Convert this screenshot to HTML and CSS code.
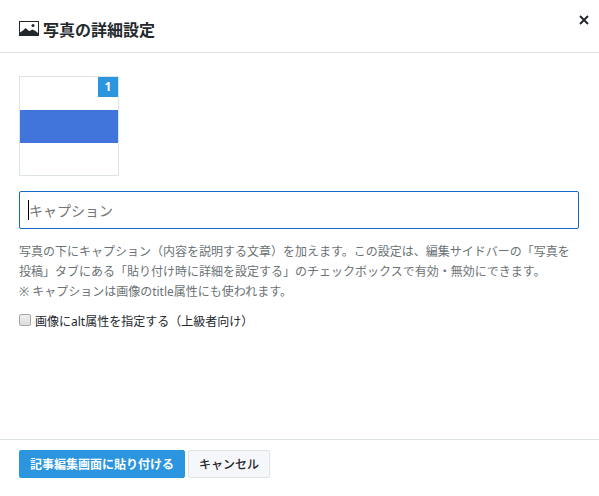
FILE: index.html
```html
<!DOCTYPE html>
<html lang="ja">
<head>
    <meta charset="UTF-8">
    <meta name="viewport" content="width=device-width, initial-scale=1.0">
    <title>写真の詳細設定</title>
    <link rel="stylesheet" href="styles.css">
</head>
<body>
    <form class="dialog">
        <header class="dialog-header">
            <svg class="icon-photo" viewBox="0 0 20 15" aria-hidden="true">
                <path fill-rule="evenodd" d="M0 0h20v15H0zM1 1v10.500l3-2L6.500 7l3.500 3 1.500-.5L13.500 8.500l3 1.500 2.500 2V1z"/>
                <circle cx="14" cy="4.500" r="1.500"/>
            </svg>
            <h1>写真の詳細設定</h1>
            <button type="button" class="close" aria-label="閉じる">
                <svg viewBox="0 0 10 10" aria-hidden="true">
                    <path d="M1 1l8 8M9 1l-8 8"/>
                </svg>
            </button>
        </header>

        <main class="dialog-body">
            <div class="thumbnail">
                <div class="thumbnail-image"></div>
                <span class="badge">1</span>
            </div>

            <input type="text" id="caption" class="caption" placeholder="キャプション" aria-label="キャプション" aria-describedby="captionHelp" autofocus>
            <p class="help" id="captionHelp">
                写真の下にキャプション（内容を説明する文章）を加えます。この設定は、編集サイドバーの「写真を投稿」タブにある「貼り付け時に詳細を設定する」のチェックボックスで有効・無効にできます。<br>
                ※ キャプションは画像のtitle属性にも使われます。
            </p>

            <div class="alt-option">
                <input type="checkbox" id="useAlt">
                <label for="useAlt">画像にalt属性を指定する（上級者向け）</label>
            </div>
        </main>

        <footer class="dialog-footer">
            <button type="submit" class="btn btn-primary">記事編集画面に貼り付ける</button>
            <button type="button" class="btn">キャンセル</button>
        </footer>
    </form>
</body>
</html>
```

FILE: styles.css
```css
* {
    box-sizing: border-box;
}

body {
    margin: 0;
    background-color: #fff;
    color: #23282c;
    font-family: "Noto Sans", "Noto Sans CJK JP", sans-serif;
    font-size: 12px;
    line-height: 20px;
}

.dialog {
    display: flex;
    flex-direction: column;
    min-height: 100vh;
}

.dialog-header {
    position: relative;
    display: flex;
    align-items: center;
    gap: 4px;
    padding: 18px 20px 10px 19px;
    border-bottom: 1px solid #dde4e6;
}

.dialog-header h1 {
    margin: 0;
    font-size: 16px;
    line-height: 24px;
}

.icon-photo {
    width: 20px;
    height: 15px;
    margin-bottom: 3px;
    fill: #23282c;
}

.close {
    position: absolute;
    top: 10px;
    right: 5px;
    display: flex;
    padding: 5px;
    border: none;
    background: none;
    cursor: pointer;
}

.close svg {
    width: 10px;
    height: 10px;
    stroke: #23282c;
    stroke-width: 2;
}

.dialog-body {
    flex: 1;
    padding: 23px 20px 20px 19px;
}

.thumbnail {
    position: relative;
    display: flex;
    align-items: center;
    width: 100px;
    height: 100px;
    margin-bottom: 15px;
    border: 1px solid #dde4e6;
}

.thumbnail-image {
    flex: 1;
    height: 33px;
    background-color: #4275dc;
}

.badge {
    position: absolute;
    top: 0;
    right: 0;
    width: 20px;
    background-color: #2c95df;
    color: #fff;
    font-weight: bold;
    text-align: center;
}

.caption {
    display: block;
    width: 100%;
    height: 38px;
    padding: 0 9px;
    border: 1px solid #dde4e6;
    border-radius: 2px;
    font-family: inherit;
    font-size: 14px;
}

.caption:focus {
    border-color: #1269c7;
    outline: none;
}

/* steady caret while the field is empty */
.caption:focus:placeholder-shown {
    background: linear-gradient(#000, #000) 8px center / 1px 20px no-repeat;
    caret-color: transparent;
}

.caption::placeholder {
    color: #757575;
}

.help {
    margin: 13px 0 10px;
    color: #6b7275;
}

.alt-option {
    display: flex;
    align-items: center;
    gap: 4px;
}

.alt-option input {
    appearance: none;
    width: 12px;
    height: 12px;
    margin: 0 0 4px;
    border: 1px solid #a6a6a6;
    border-radius: 2px;
    background: linear-gradient(#eee, #dcdcdc);
}

.alt-option input:checked {
    background: #2c95df;
}

.dialog-footer {
    display: flex;
    gap: 3px;
    padding: 10px 19px 18px;
    border-top: 1px solid #dde4e6;
}

.btn {
    height: 28px;
    padding: 0 10px;
    border: 1px solid #dde4e6;
    border-radius: 2px;
    background-color: #f6f7fa;
    color: #23282c;
    font-family: inherit;
    font-size: 12px;
    font-weight: 500;
    cursor: pointer;
}

.btn-primary {
    border-color: #2c95df;
    background-color: #2c95df;
    color: #fff;
    font-weight: bold;
}
```
